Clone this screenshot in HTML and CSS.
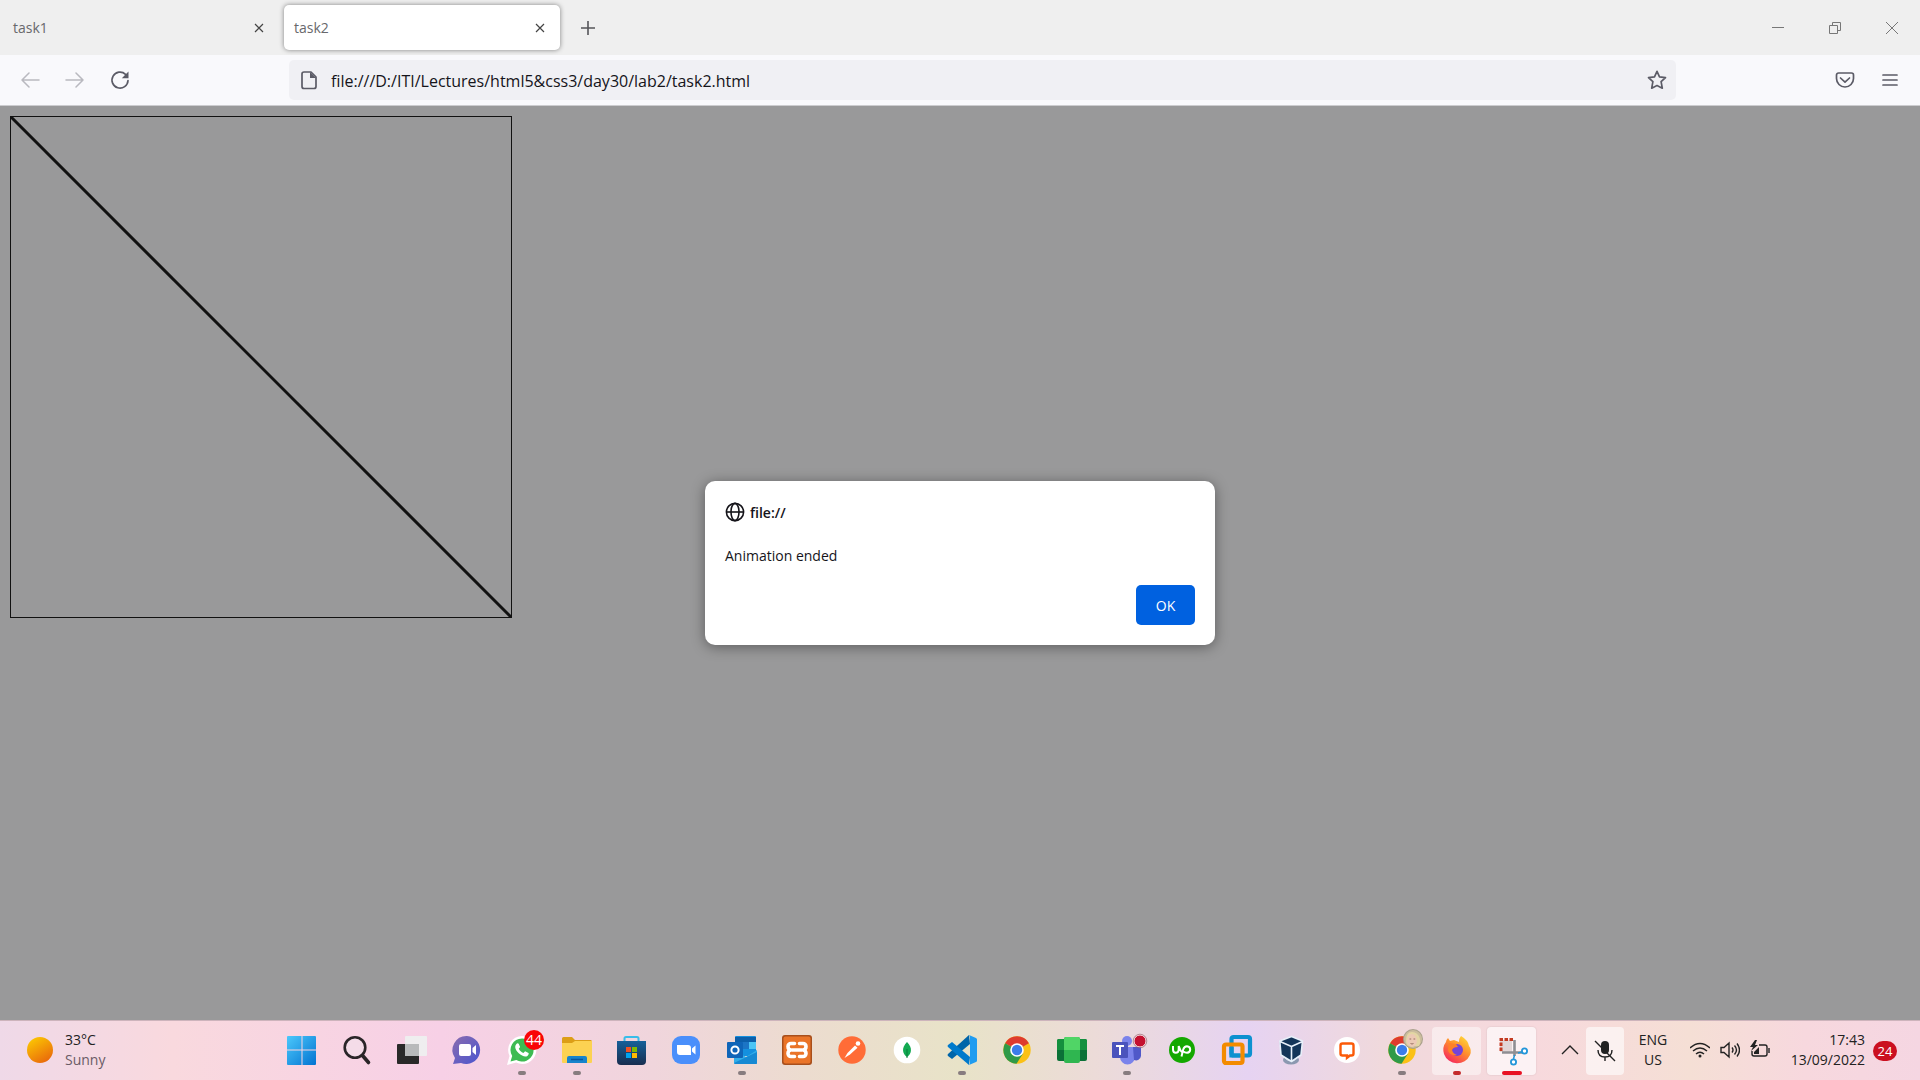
FILE: index.html
```html
<!DOCTYPE html>
<html lang="en">
<head>
<meta charset="utf-8">
<title>task2</title>
<link rel="stylesheet" href="styles.css">
</head>
<body>
<header class="tabbar">
  <div class="tab"><span class="tab-title">task1</span>
    <button class="tab-close" aria-label="Close task1"><svg width="10" height="10" viewBox="0 0 10 10"><path d="M1 1l8 8M9 1l-8 8"/></svg></button></div>
  <div class="tab tab-active"><span class="tab-title">task2</span>
    <button class="tab-close" aria-label="Close task2"><svg width="10" height="10" viewBox="0 0 10 10"><path d="M1 1l8 8M9 1l-8 8"/></svg></button></div>
  <button class="new-tab" aria-label="New tab"><svg width="16" height="16" viewBox="0 0 16 16"><path d="M8 1v14M1 8h14"/></svg></button>
  <div class="window-controls">
    <button aria-label="Minimize"><svg width="14" height="14" viewBox="0 0 14 14"><path d="M1 6.500h12"/></svg></button>
    <button aria-label="Restore"><svg width="14" height="14" viewBox="0 0 14 14"><path d="M1.500 4.500h8v8h-8zM4.500 4.500v-3h8v8h-3"/></svg></button>
    <button aria-label="Close window"><svg width="14" height="14" viewBox="0 0 14 14"><path d="M1 1l12 12M13 1L1 13"/></svg></button>
  </div>
</header>
<nav class="toolbar">
  <div class="nav-buttons">
    <button class="dim" aria-label="Back"><svg width="20" height="20" viewBox="0 0 20 20"><path d="M19 10H2M9 3l-7 7 7 7"/></svg></button>
    <button class="dim" aria-label="Forward"><svg width="20" height="20" viewBox="0 0 20 20"><path d="M1 10h17M11 3l7 7-7 7"/></svg></button>
    <button aria-label="Reload"><svg width="20" height="20" viewBox="0 0 20 20"><path class="bold" d="M18 10.500a8 8 0 1 1-2.500-6.200l1 1"/><path class="solid" d="M18.500 1.500v6.700h-6.700z"/></svg></button>
  </div>
  <div class="address">
    <svg width="18" height="20" viewBox="0 0 18 20"><path class="bold" d="M4 2h7l5 5v9.500a2 2 0 0 1-2 2H4a2 2 0 0 1-2-2V4a2 2 0 0 1 2-2z"/><path class="solid" d="M10 2v6h6z"/></svg>
    <input class="address-input" type="text" aria-label="Address" value="file:///D:/ITI/Lectures/html5&amp;css3/day30/lab2/task2.html">
    <button aria-label="Bookmark"><svg width="20" height="20" viewBox="0 0 20 20"><path class="bold" d="M10 1.300l2.500 5.500 6 .8-4.400 4.100 1.200 6.500L10 15.600l-5.300 2.600 1.200-6.500L1.500 7.600l6-.8z"/></svg></button>
  </div>
  <div class="tools">
    <button aria-label="Save to Pocket"><svg width="20" height="20" viewBox="0 0 20 20"><path class="bold" d="M3.500 3h13a2 2 0 0 1 2 2v3.500a8.500 8.500 0 0 1-17 0V5a2 2 0 0 1 2-2zM5.500 8l4.500 4.200L14.500 8"/></svg></button>
    <button aria-label="Menu"><svg width="16" height="16" viewBox="0 0 16 16"><path class="bold" d="M1 3h14M1 8h14M1 13h14"/></svg></button>
  </div>
</nav>
<main class="viewport">
  <svg class="drawing" width="502" height="502" viewBox="0 0 502 502"><rect x=".5" y=".5" width="501" height="501"/><path d="M1 1l500 500"/></svg>
  <div class="overlay">
    <section class="dialog" role="dialog" aria-labelledby="dialog-title">
      <h1 class="dialog-title" id="dialog-title"><svg width="20" height="20" viewBox="0 0 20 20"><circle cx="10" cy="10" r="8.600"/><ellipse cx="10" cy="10" rx="4" ry="8.600"/><path d="M1.400 10h17.200"/></svg>file://</h1>
      <p class="dialog-text">Animation ended</p>
      <button class="ok">OK</button>
    </section>
  </div>
</main>
<footer class="taskbar">
  <button class="weather">
    <svg width="26" height="26" viewBox="0 0 26 26"><defs><linearGradient id="sun" x1=".2" y1="0" x2=".8" y2="1"><stop offset="0" stop-color="#fcc802"/><stop offset="1" stop-color="#e8650c"/></linearGradient></defs><circle cx="13" cy="13" r="13" fill="url(#sun)"/></svg>
    <span class="weather-text"><span>33°C</span><span class="muted">Sunny</span></span>
  </button>
  <div class="apps">
    <button class="app" aria-label="Start"><svg viewBox="0 0 30 30"><defs><linearGradient id="win" x1="0" y1="0" x2="1" y2="1"><stop offset="0" stop-color="#4cc8fb"/><stop offset="1" stop-color="#0273d1"/></linearGradient></defs><path fill="url(#win)" d="M1 1h13.500v13.500H0V2a1 1 0 0 1 1-1zM15.500 1H28a1 1 0 0 1 1 1v12.500H15.500zM0 15.500h14.500V30H1a1 1 0 0 1-1-1zM15.500 15.500H29V29a1 1 0 0 1-1 1H15.500z"/></svg></button>
    <button class="app" aria-label="Search"><svg viewBox="0 0 30 30"><circle cx="13" cy="12.500" r="10.300" fill="#f4dce8" stroke="#2a2528" stroke-width="2.600"/><path d="M20.500 20.500l6 7" stroke="#2a2528" stroke-width="3.600" stroke-linecap="round"/></svg></button>
    <button class="app" aria-label="Task view"><svg viewBox="0 0 30 30"><rect x="0" y="9" width="22" height="20" rx="1" fill="#292929"/><rect x="8" y="1" width="22" height="20" rx="1" fill="#eef0f0" opacity=".93"/><path d="M8 9h14v12H8z" fill="#b8babb"/></svg></button>
    <button class="app" aria-label="Chat"><svg viewBox="0 0 30 30"><defs><linearGradient id="chat" x1="0" y1="0" x2="1" y2="1"><stop offset="0" stop-color="#8a6cae"/><stop offset="1" stop-color="#4a55d0"/></linearGradient></defs><path d="M15 1a14 14 0 1 1-6 27l-8 1 2-6A14 14 0 0 1 15 1z" fill="url(#chat)"/><rect x="7" y="9" width="12" height="12" rx="2" fill="#fff"/><path d="M20.500 13l3.500-3v10l-3.500-3z" fill="#fff"/></svg></button>
    <button class="app running" aria-label="WhatsApp, 44 unread"><svg viewBox="0 0 30 30"><path d="M15 1a14 14 0 1 1-6 26.500L0 30l2.500-9A14 14 0 0 1 15 1z" fill="#fff"/><path d="M15 3.500a11.500 11.500 0 1 1-5.700 21.400L3.500 26.500l1.700-5.600A11.500 11.500 0 0 1 15 3.500z" fill="#3dbb52"/><path d="M9.200 9.300c1-1.200 2-1.200 2.600-.2l1.300 3-1.300 1.700c1 2 2.500 3.400 4.600 4.300l1.700-1.800 3.400 1.700c.7.600-.2 2.600-1.500 3.200C16 23 8.200 16.500 8.200 12c0-1.200.4-2 1-2.700z" fill="#fff"/></svg><span class="badge">44</span></button>
    <button class="app running" aria-label="File Explorer"><svg viewBox="0 0 30 30"><path d="M0 3.500A1.500 1.500 0 0 1 1.500 2H10l3 3h15.500A1.500 1.500 0 0 1 30 6.500V14H0z" fill="#dc9e17"/><path d="M0 8h10l3-2h17v21a1 1 0 0 1-1 1H1a1 1 0 0 1-1-1z" fill="#fcd252"/><path d="M5 28v-5a2 2 0 0 1 2-2h16a2 2 0 0 1 2 2v5z" fill="#1784cc"/><path d="M9 24.500h12" stroke="#0a569d" stroke-width="1.500"/></svg></button>
    <button class="app" aria-label="Microsoft Store"><svg viewBox="0 0 30 30"><defs><linearGradient id="store" x1="0" y1="0" x2="0" y2="1"><stop offset="0" stop-color="#166099"/><stop offset="1" stop-color="#182e50"/></linearGradient></defs><path d="M7.500 7V3.500a1.500 1.500 0 0 1 1.500-1.500h11a1.500 1.500 0 0 1 1.500 1.500V7" fill="none" stroke="#38bde9" stroke-width="2"/><path d="M0 6h29v20a4 4 0 0 1-4 4H4a4 4 0 0 1-4-4z" fill="url(#store)"/><path fill="#f25022" d="M9 12h5v5H9z"/><path fill="#7fba00" d="M15 12h5v5h-5z"/><path fill="#00a4ef" d="M9 18h5v5H9z"/><path fill="#ffb900" d="M15 18h5v5h-5z"/></svg></button>
    <button class="app" aria-label="Zoom"><svg viewBox="0 0 30 30"><rect x="0" y="1" width="28" height="28" rx="9" fill="#4a8ffb"/><path d="M5 10h11a3 3 0 0 1 3 3v7H8a3 3 0 0 1-3-3zM20 13.500l3.500-3v9l-3.500-3z" fill="#fff"/></svg></button>
    <button class="app running" aria-label="Outlook"><svg viewBox="0 0 30 30"><rect x="8" y="1" width="21" height="20" rx="1" fill="#1490df"/><path d="M8 2h21v5H8z" fill="#0c5faa"/><path d="M15 7h7v7h-7z" fill="#1c75c5"/><path d="M22 7h7v7h-7z" fill="#4cc5f5"/><path d="M7 15l12 7 11-7v13a1 1 0 0 1-1 1H8a1 1 0 0 1-1-1z" fill="#32aee9"/><path d="M7 28l23-11v11a1 1 0 0 1-1 1H8z" fill="#1689d3"/><rect x="0" y="7" width="16" height="16" rx="1" fill="#0f65b8"/><circle cx="8" cy="15" r="3.600" fill="none" stroke="#fff" stroke-width="2"/></svg></button>
    <button class="app" aria-label="XAMPP"><svg viewBox="0 0 30 30"><rect x="0" y="0" width="30" height="30" rx="3" fill="#a84f1c"/><rect x="1.500" y="1.500" width="27" height="27" rx="2" fill="#ea7428"/><path d="M12.500 8.500H9a3 3 0 0 0-3 3q0 3 3 3.500-3 .5-3 3.500a3 3 0 0 0 3 3h3.500M17.500 8.500H21a3 3 0 0 1 3 3q0 3-3 3.500 3 .5 3 3.500a3 3 0 0 1-3 3h-3.500M10 15h10" fill="none" stroke="#fff" stroke-width="3.600" stroke-linecap="round"/></svg></button>
    <button class="app" aria-label="Postman"><svg viewBox="0 0 30 30"><circle cx="15" cy="15" r="13.700" fill="#ff6c37"/><path d="M7.500 23l3-5 7.500-7.500 2.500 2.300-7.500 6.700z" fill="#fff"/><circle cx="21" cy="8.500" r="2.300" fill="#fff"/></svg></button>
    <button class="app" aria-label="MongoDB Compass"><svg viewBox="0 0 30 30"><circle cx="15" cy="15" r="13.300" fill="#fff"/><path d="M15 7c6 6 4.500 12 0 15-4.500-3-6-9 0-15z" fill="#13aa52"/><path d="M15 14v9" stroke="#0b7a3a"/></svg></button>
    <button class="app running" aria-label="Visual Studio Code"><svg viewBox="0 0 30 30"><path d="M22 0l1 9L5 24l-4-3q-1-1 0-2L22 0z" fill="#0065a9"/><path d="M5 7l18 15-1 8L1 12q-1-1 0-2z" fill="#007acc"/><path d="M22 0l7 3q1 .5 1 1.500v21q0 1-1 1.500l-7 3q1-1 1-2.500v-25Q23 1 22 0z" fill="#1f9cf0"/></svg></button>
    <button class="app" aria-label="Chrome"><svg viewBox="0 0 30 30"><g id="chrome"><circle cx="15" cy="15" r="13.700" fill="#fbc116"/><path d="M15 15L3.100 8.200a13.700 13.700 0 0 1 23.800 0z" fill="#de3b2e"/><path d="M15 15l6 3.500-6.500 10.200A13.700 13.700 0 0 1 3.100 8.200z" fill="#2f9a48"/><circle cx="15" cy="15" r="6.800" fill="#fff"/><circle cx="15" cy="15" r="5.200" fill="#3b7de9"/></g></svg></button>
    <button class="app" aria-label="Library"><svg viewBox="0 0 30 30"><rect x="0" y="4" width="30" height="22" rx="2" fill="#0b7137"/><path d="M2 4h26a2 2 0 0 1 2 2v9H0V6a2 2 0 0 1 2-2z" fill="#14903e"/><rect x="7" y="2" width="16" height="26" rx="2" fill="#2fb650"/><path d="M9 2h12a2 2 0 0 1 2 2v11H7V4a2 2 0 0 1 2-2z" fill="#50d566"/></svg></button>
    <button class="app running" aria-label="Teams"><svg viewBox="0 0 30 30"><circle cx="15" cy="6" r="5" fill="#7b83eb"/><path d="M8 12h15v10a7.500 7.500 0 0 1-15 0z" fill="#7b83eb"/><path d="M21 12h8v9a5 5 0 0 1-7 4z" fill="#5059c9"/><rect x="0" y="7" width="16" height="16" rx="1" fill="#4b53bc"/><path d="M4 11h8M8 11v9" stroke="#fff" stroke-width="2"/><circle cx="28" cy="6" r="6" fill="#c4102f" stroke="#f6dfe2" stroke-width="1"/><circle cx="28" cy="6" r="6.800" fill="none" stroke="#8b5862" stroke-width=".6"/></svg></button>
    <button class="app" aria-label="Upwork"><svg viewBox="0 0 30 30"><circle cx="15" cy="15" r="13" fill="#14a800"/><path d="M6 11v3.500q0 3.200 2.800 3.200t2.900-3.200V11q1.500 5 4 6.700M14.500 21.500l1.700-7q1-3.300 3.800-3.300 3.200.3 3.200 3.300t-3.200 3.300q-2.200 0-4.300-1.800" fill="none" stroke="#fff" stroke-width="2"/></svg></button>
    <button class="app" aria-label="VMware"><svg viewBox="0 0 30 30"><rect x="9.500" y="2" width="18.500" height="18.500" rx="2" fill="none" stroke="#0d91d0" stroke-width="4.200"/><rect x="2" y="9.500" width="18.500" height="18.500" rx="2" fill="none" stroke="#f38b00" stroke-width="4.200"/><path d="M9.500 12v8.500H18" fill="none" stroke="#0d91d0" stroke-width="4.200"/></svg></button>
    <button class="app" aria-label="VirtualBox"><svg viewBox="0 0 30 30"><ellipse cx="14" cy="25" rx="8" ry="4.500" fill="#8b98b0"/><path d="M8 23q6 6 12 0" fill="none" stroke="#dfe5f0"/><path d="M14.500 1.500L25.500 6 24 20l-9.500 7L4 20 2.500 6z" fill="#143559"/><path d="M3 6.500l11.500 5 11-5M14.500 12v14.500M2.800 6l11.700-4.500L25.500 6 24 20l-9.500 6.500L4 20z" fill="none" stroke="#e8f0fa" stroke-width="1.600" stroke-linejoin="round"/></svg></button>
    <button class="app" aria-label="Messages"><svg viewBox="0 0 30 30"><circle cx="15" cy="15" r="13" fill="#fff"/><path d="M10.500 8.500h9a2 2 0 0 1 2 2v8a2 2 0 0 1-2 2H18l-3 2.300V20.500h-4.500a2 2 0 0 1-2-2v-8a2 2 0 0 1 2-2z" fill="none" stroke="#fb5a08" stroke-width="2.400"/></svg></button>
    <button class="app running" aria-label="Chrome profile"><svg viewBox="0 0 30 30"><use href="#chrome"/><circle cx="26" cy="4" r="10" fill="#a9a08b"/><circle cx="26" cy="4" r="9" fill="#cbbd9d"/><path d="M19 6q0-9 6-9t8 7q1 4-1 7l-10 0q-3-1-3-5z" fill="#e3d6a4"/><ellipse cx="25" cy="5.500" rx="5" ry="6.500" fill="#ecc9b5"/><path d="M22.500 4h1.700M26.500 4h1.700M23.500 8.500q1.500 1 3 0" stroke="#8f6658" stroke-width=".9" fill="none"/></svg></button>
    <button class="app running alert hot" aria-label="Firefox"><svg viewBox="0 0 30 30"><defs><linearGradient id="fox" x1=".9" y1="0" x2=".2" y2="1"><stop offset="0" stop-color="#ffe23a"/><stop offset=".45" stop-color="#ff912d"/><stop offset="1" stop-color="#f52060"/></linearGradient></defs><path d="M19 1q7 4 8 10 3 4 1 9a14 14 0 0 1-26-1Q0 12 4 7q0-2 2-4l2 3 4-1 5 2q0-4 2-6z" fill="url(#fox)"/><circle cx="15" cy="15" r="6" fill="#7444d8"/><path d="M7 8l7 1 2 3q-5 0-6 3 1 4 5 5-8 1-9-5z" fill="#ff8127"/></svg></button>
    <button class="app running active hot" aria-label="Snipping Tool"><svg viewBox="0 0 30 30"><path d="M3 5h12v12H3z" fill="#e2d6d6"/><path d="M4 16V4.500h13" fill="none" stroke="#c33b22" stroke-width="3" stroke-dasharray="3.500 1.500"/><path d="M17.500 5v16M5 17.500h20" fill="none" stroke="#8e8e92" stroke-width="2.600"/><circle cx="27.500" cy="16" r="2.600" fill="#fff" stroke="#2396d9" stroke-width="1.800"/><circle cx="16.500" cy="27" r="2.600" fill="#fff" stroke="#2396d9" stroke-width="1.800"/><path d="M17.500 20l-1 4M21 18l4-1" stroke="#2396d9" stroke-width="1.500"/></svg></button>
  </div>
  <div class="tray">
    <button class="tray-button" aria-label="Show hidden icons"><svg width="18" height="18" viewBox="0 0 18 18"><path d="M1 12l8-8 8 8"/></svg></button>
    <button class="tray-button mic" aria-label="Microphone muted"><svg width="22" height="22" viewBox="0 0 22 22"><rect x="7" y="1" width="8" height="13" rx="4" fill="#222" stroke="none"/><path d="M4 10q0 7 7 7t7-7M11 17v4M1 1l20 20"/></svg></button>
    <button class="language"><span>ENG</span><span>US</span></button>
    <button class="status" aria-label="Network, sound and battery">
      <svg width="20" height="20" viewBox="0 0 20 20"><path d="M0 8q10-9 20 0M3 11q7-6 14 0M6 14q4-3.500 8 0"/><circle cx="10" cy="16" r="1.500" fill="#222" stroke="none"/></svg>
      <svg width="20" height="20" viewBox="0 0 20 20"><path d="M1 7.500h3l5-4.500v14l-5-4.500H1zM12 7.500q2 2.500 0 5M14.500 5.500q4 4.500 0 9M17 3.500q5 6.500 0 13"/></svg>
      <svg width="20" height="20" viewBox="0 0 20 20"><path d="M9 5h6a2 2 0 0 1 2 2v7a2 2 0 0 1-2 2H4a2 2 0 0 1-2-2v-3M19 8v5"/><path d="M4 14V12l5-5v7zM5 0L0 7h3L1 11l7-6H5l2-5z" fill="#222" stroke="none"/></svg>
    </button>
    <button class="clock"><span>17:43</span><span>13/09/2022</span></button>
    <button class="count" aria-label="24 notifications">24</button>
  </div>
</footer>
</body>
</html>
```

FILE: styles.css
```css
* { box-sizing: border-box; }

body {
  margin: 0;
  height: 100vh;
  display: flex;
  flex-direction: column;
  font-family: "Open Sans", "Noto Sans", sans-serif;
  font-size: 14px;
  color: #15141a;
}

button {
  display: flex;
  align-items: center;
  justify-content: center;
  padding: 0;
  border: 0;
  background: none;
  font: inherit;
  color: inherit;
}

svg { display: block; flex: none; }

/* Tab strip */
.tabbar {
  display: flex;
  align-items: center;
  height: 55px;
  flex: none;
  background: #efefef;
}
.tab {
  display: flex;
  align-items: center;
  justify-content: space-between;
  width: 276px;
  height: 45px;
  margin-left: 3px;
  padding: 0 10px;
  border-radius: 5px;
  color: #68686c;
}
.tab + .tab { margin-left: 5px; }
.tab-active { background: #fff; box-shadow: 0 0 5px #0007; }
.tab-close { width: 20px; height: 20px; }
.tab-close svg { stroke: #444; stroke-width: 1.2; }
.new-tab { width: 55px; height: 45px; }
.new-tab svg { stroke: #55555a; stroke-width: 1.6; }
.window-controls { display: flex; margin-left: auto; }
.window-controls button { width: 57px; height: 45px; }
.window-controls svg { fill: none; stroke: #777; }

/* Navigation toolbar */
.toolbar {
  display: flex;
  align-items: center;
  height: 51px;
  flex: none;
  background: #f9f9fc;
  border-bottom: 1px solid #cccccf;
}
.toolbar svg { fill: none; stroke: #5b5b66; stroke-width: 1.5; stroke-linecap: round; stroke-linejoin: round; }
.toolbar .bold { stroke-width: 1.7; }
.toolbar .solid { fill: #5b5b66; stroke: none; }
.nav-buttons { display: flex; width: 289px; padding-left: 7px; }
.nav-buttons button { width: 45px; height: 40px; }
.nav-buttons .dim { opacity: .4; }
.address {
  display: flex;
  align-items: center;
  flex: 1;
  height: 40px;
  padding: 0 9px 0 11px;
  gap: 13px;
  border-radius: 5px;
  background: #f0f0f4;
}
.address-input {
  flex: 1;
  min-width: 0;
  padding: 2px 0 0;
  border: 0;
  outline: 0;
  background: none;
  font: inherit;
  font-size: 16px;
  color: #15141a;
}
.tools { display: flex; justify-content: flex-end; width: 244px; padding-right: 8px; }
.tools button { width: 45px; height: 40px; }

/* Page content and alert */
.viewport {
  position: relative;
  flex: 1;
  min-height: 0;
  padding: 10px;
  background: #99999a;
}
.drawing { fill: none; stroke: #111; }
.drawing path { stroke-width: 3; }
.overlay {
  position: absolute;
  inset: 0;
  display: grid;
  place-items: center;
}
.dialog {
  display: flex;
  flex-direction: column;
  width: 510px;
  max-width: 100%;
  padding: 20px;
  border-radius: 10px;
  background: #fff;
  box-shadow: 0 2px 14px #0006;
}
.dialog-title {
  display: flex;
  align-items: center;
  gap: 5px;
  height: 22px;
  margin: 0;
  font-size: 14px;
  font-weight: 600;
}
.dialog-title svg { fill: none; stroke: #15141a; stroke-width: 1.6; }
.dialog-text { margin: 23px 0 19px; line-height: 20px; }
.ok {
  align-self: flex-end;
  width: 59px;
  height: 40px;
  border-radius: 5px;
  background: #0061e0;
  color: #fff;
}

/* Taskbar */
.taskbar {
  display: flex;
  align-items: center;
  height: 60px;
  flex: none;
  border-top: 1px solid #cdb4bc;
  background: linear-gradient(90deg, #efd9e8, #f9d9de 9%, #f7d0e6 23%, #f0d5dc 34%, #ecdccf 42%, #e8e3c8 50%, #ecdbd8 57%, #e6d3f2 65%, #f0d9dc 72%, #f7d9dd 80%, #f5dfd5 88%, #f7d8de 94%, #f5d6e2);
  color: #222;
}
.weather {
  justify-content: flex-start;
  gap: 12px;
  width: 274px;
  height: 48px;
  padding: 0 0 2px 27px;
  text-align: left;
}
.weather-text, .language, .clock { display: flex; flex-direction: column; line-height: 20px; }
.muted { color: #6a5c66; }
.apps { display: flex; }
.app {
  position: relative;
  width: 55px;
  height: 48px;
  padding-bottom: 2px;
}
.app svg { width: 30px; height: 30px; overflow: visible; }
.running::after {
  content: "";
  position: absolute;
  bottom: 0;
  left: 50%;
  width: 8px;
  height: 4px;
  margin-left: -4px;
  border-radius: 2px;
  background: #877c7f;
}
.hot::before {
  content: "";
  position: absolute;
  inset: 0 3px;
  z-index: -1;
  border-radius: 4px;
  background: #fff7;
}
.hot { z-index: 0; }
.alert::after { background: #c42b2b; }
.active::before { background: #fffa; box-shadow: 0 0 2px #0002; }
.active::after { width: 20px; margin-left: -10px; background: #e81123; }
.badge {
  position: absolute;
  top: 3px;
  right: 5px;
  width: 20px;
  height: 20px;
  border-radius: 50%;
  background: #f90505;
  color: #fff;
  line-height: 20px;
}
.tray { display: flex; align-items: center; margin-left: auto; padding-right: 23px; }
.tray svg { fill: none; stroke: #222; stroke-width: 1.4; }
.tray-button { width: 32px; height: 48px; }
.mic { width: 38px; border-radius: 4px; background: #fff9; }
.language { width: 58px; }
.status { gap: 10px; padding: 0 8px; }
.clock { align-items: flex-end; width: 87px; }
.language, .status, .clock { height: 48px; padding-bottom: 2px; }
.count {
  width: 24px;
  height: 20px;
  margin-left: 8px;
  border-radius: 10px;
  background: #cb1020;
  color: #fff;
  font-size: 13px;
}
```
